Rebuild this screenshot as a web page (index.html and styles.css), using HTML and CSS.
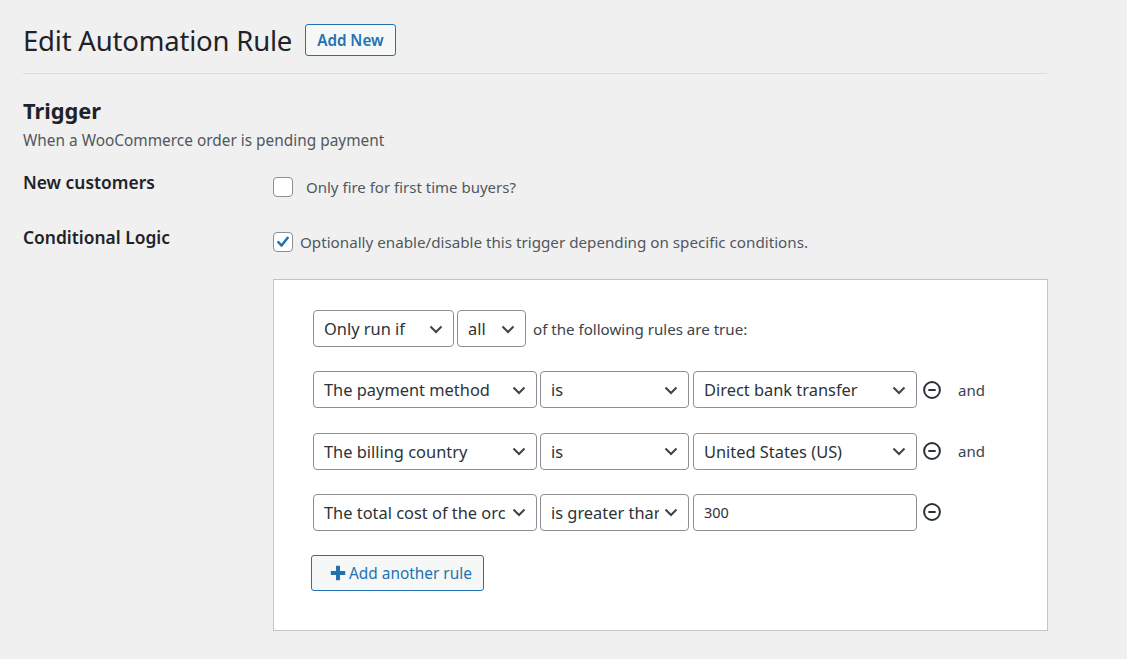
FILE: index.html
```html
<!DOCTYPE html>
<html lang="en">
<head>
<meta charset="utf-8">
<title>Edit Automation Rule</title>
<link rel="stylesheet" href="styles.css">
</head>
<body>
<div class="wrap">
  <div class="page-head">
    <h1 class="page-title">Edit Automation Rule</h1>
    <a class="btn-outline add-new" href="#">Add New</a>
  </div>
  <hr class="divider">

  <h2 class="section-title">Trigger</h2>
  <p class="section-desc">When a WooCommerce order is pending payment</p>

  <div class="field-row row-first">
    <div class="field-label">New customers</div>
    <label class="check-line">
      <span class="checkbox"></span>
      <span class="check-text gap-wide">Only fire for first time buyers?</span>
    </label>
  </div>

  <div class="field-row row-second">
    <div class="field-label">Conditional Logic</div>
    <div class="field-content">
      <label class="check-line">
        <span class="checkbox checked">
          <svg viewBox="0 0 20 20" width="20" height="20"><path d="M4.8 10.2l3.6 3.7 6.8-8.6" fill="none" stroke="#2271b1" stroke-width="2.8" stroke-linecap="round" stroke-linejoin="round"/></svg>
        </span>
        <span class="check-text">Optionally enable/disable this trigger depending on specific conditions.</span>
      </label>

      <div class="logic-box">
        <div class="rule-row">
          <div class="select w-141"><span class="select-text">Only run if</span><svg class="chev" viewBox="0 0 16 16"><path d="M2.5 5.5l5.5 5.5 5.5-5.5" fill="none" stroke="#3c434a" stroke-width="2"/></svg></div>
          <div class="select w-69"><span class="select-text">all</span><svg class="chev" viewBox="0 0 16 16"><path d="M2.5 5.5l5.5 5.5 5.5-5.5" fill="none" stroke="#3c434a" stroke-width="2"/></svg></div>
          <span class="rule-note">of the following rules are true:</span>
        </div>

        <div class="rule-row">
          <div class="select w-224"><span class="select-text">The payment method</span><svg class="chev" viewBox="0 0 16 16"><path d="M2.5 5.5l5.5 5.5 5.5-5.5" fill="none" stroke="#3c434a" stroke-width="2"/></svg></div>
          <div class="select w-149"><span class="select-text">is</span><svg class="chev" viewBox="0 0 16 16"><path d="M2.5 5.5l5.5 5.5 5.5-5.5" fill="none" stroke="#3c434a" stroke-width="2"/></svg></div>
          <div class="select w-224 third"><span class="select-text">Direct bank transfer</span><svg class="chev" viewBox="0 0 16 16"><path d="M2.5 5.5l5.5 5.5 5.5-5.5" fill="none" stroke="#3c434a" stroke-width="2"/></svg></div>
          <svg class="remove" viewBox="0 0 20 20"><circle cx="10" cy="10" r="7.9" fill="none" stroke="#2c3338" stroke-width="2"/><path d="M6.3 10h7.4" stroke="#2c3338" stroke-width="2"/></svg>
          <span class="and">and</span>
        </div>

        <div class="rule-row">
          <div class="select w-224"><span class="select-text">The billing country</span><svg class="chev" viewBox="0 0 16 16"><path d="M2.5 5.5l5.5 5.5 5.5-5.5" fill="none" stroke="#3c434a" stroke-width="2"/></svg></div>
          <div class="select w-149"><span class="select-text">is</span><svg class="chev" viewBox="0 0 16 16"><path d="M2.5 5.5l5.5 5.5 5.5-5.5" fill="none" stroke="#3c434a" stroke-width="2"/></svg></div>
          <div class="select w-224 third"><span class="select-text">United States (US)</span><svg class="chev" viewBox="0 0 16 16"><path d="M2.5 5.5l5.5 5.5 5.5-5.5" fill="none" stroke="#3c434a" stroke-width="2"/></svg></div>
          <svg class="remove" viewBox="0 0 20 20"><circle cx="10" cy="10" r="7.9" fill="none" stroke="#2c3338" stroke-width="2"/><path d="M6.3 10h7.4" stroke="#2c3338" stroke-width="2"/></svg>
          <span class="and">and</span>
        </div>

        <div class="rule-row">
          <div class="select w-224"><span class="select-text">The total cost of the orc</span><svg class="chev" viewBox="0 0 16 16"><path d="M2.5 5.5l5.5 5.5 5.5-5.5" fill="none" stroke="#3c434a" stroke-width="2"/></svg></div>
          <div class="select w-149"><span class="select-text">is greater thar</span><svg class="chev" viewBox="0 0 16 16"><path d="M2.5 5.5l5.5 5.5 5.5-5.5" fill="none" stroke="#3c434a" stroke-width="2"/></svg></div>
          <div class="text-input w-224 third">300</div>
          <svg class="remove" viewBox="0 0 20 20"><circle cx="10" cy="10" r="7.9" fill="none" stroke="#2c3338" stroke-width="2"/><path d="M6.3 10h7.4" stroke="#2c3338" stroke-width="2"/></svg>
        </div>

        <a class="btn-outline add-rule" href="#">
          <svg class="plus" viewBox="0 0 20 20"><path d="M10 2v16M2 10h16" stroke="#2271b1" stroke-width="4.4"/></svg>Add another rule
        </a>
      </div>
    </div>
  </div>
</div>
</body>
</html>
```

FILE: styles.css
```css
* { box-sizing: border-box; }

html, body {
  margin: 0;
  padding: 0;
  background: #f0f0f1;
}

body {
  font-family: "Noto Sans", "Open Sans", sans-serif;
  color: #1d2327;
  font-size: 15px;
}

.wrap {
  width: 1024px;
  margin-left: 23px;
}

.page-head {
  display: flex;
  align-items: center;
  gap: 13px;
  height: 62px;
  padding-top: 18px;
}

.page-title {
  margin: 0;
  font-size: 27.5px;
  font-weight: 400;
  color: #1d2327;
  letter-spacing: -0.2px;
}

.btn-outline {
  display: inline-flex;
  align-items: center;
  border: 1px solid #2271b1;
  border-radius: 3px;
  background: #f6f7f7;
  color: #2271b1;
  text-decoration: none;
}

.add-new {
  height: 32px;
  padding: 0 11px;
  font-size: 15.2px;
  font-weight: 600;
}

.divider {
  border: 0;
  border-top: 1px solid #dcdcde;
  margin: 11px 0 0;
}

.section-title {
  margin: 22px 0 0;
  font-size: 21.8px;
  font-weight: 700;
  line-height: 30px;
}

.section-desc {
  margin: 4px 0 0;
  font-size: 15.4px;
  color: #50575e;
  line-height: 21px;
}

.field-row {
  display: grid;
  grid-template-columns: 250px 1fr;
}

.row-first { margin-top: 22px; }
.row-second { margin-top: 31px; }

.field-label {
  font-size: 17.4px;
  font-weight: 600;
  line-height: 18px;
  color: #1d2327;
}

.check-line {
  display: flex;
  align-items: center;
  height: 20px;
  margin-top: 4px;
}

.checkbox {
  width: 20px;
  height: 20px;
  flex: none;
  border: 1px solid #8c8f94;
  border-radius: 4px;
  background: #fff;
  display: flex;
  align-items: center;
  justify-content: center;
}

.checkbox svg { display: block; width: 20px; height: 20px; }

.check-text {
  margin-left: 7px;
  font-size: 15.2px;
  color: #50575e;
}

.check-text.gap-wide { margin-left: 13px; font-size: 15px; }

.logic-box {
  margin-top: 27px;
  width: 775px;
  height: 352px;
  background: #fff;
  border: 1px solid #c3c4c7;
  padding: 30px 0 0 39px;
}

.rule-row {
  display: flex;
  align-items: center;
  gap: 3px;
  height: 37px;
  margin-bottom: 24.3px;
}

.select, .text-input {
  height: 37px;
  border: 1px solid #8c8f94;
  border-radius: 4px;
  background: #fff;
  display: flex;
  align-items: center;
  padding-left: 10px;
  font-size: 16.4px;
  color: #2c3338;
  flex: none;
}

.select { padding-right: 9px; }

.third { margin-left: 1px; }

.select-text {
  flex: 1;
  overflow: hidden;
  white-space: nowrap;
}

.chev {
  width: 16px;
  height: 16px;
  flex: none;
  margin-left: 4px;
}

.text-input { font-size: 14.5px; }

.w-141 { width: 141px; }
.w-69 { width: 69px; }
.w-224 { width: 224px; }
.w-149 { width: 149px; }

.rule-note {
  margin-left: 4px;
  font-size: 15.1px;
  color: #3c434a;
}

.remove {
  width: 20px;
  height: 20px;
  margin-left: 2px;
  flex: none;
}

.and {
  margin-left: 13px;
  font-size: 15px;
  color: #3c434a;
}

.add-rule {
  height: 36px;
  width: 173px;
  margin-left: -2px;
  padding-left: 17px;
  font-size: 15.4px;
}

.plus {
  width: 18px;
  height: 18px;
  margin-right: 2px;
}
```
